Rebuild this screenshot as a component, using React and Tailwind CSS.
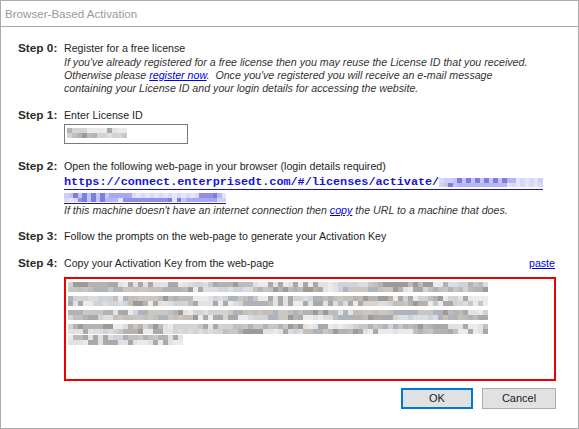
import React from 'react';

// Pixel-mosaic used for the blurred parts (license id, URL tail, activation key).
const mosaic = (seed, count, palette) => {
    let s = seed;
    const out = [];
    for (let i = 0; i < count; i++) {
        s = (s * 1103515245 + 12345) % 2147483648;
        out.push(palette[(s >> 8) % palette.length]);
    }
    return out;
};

const GRAYS = ['#a9a9aa', '#bdbcbc', '#c9c6c4', '#d6d4d3', '#e3e2e2', '#b7b2ad', '#aeb4bb', '#cfd2d6', '#ecebea', '#9d9a98', '#c4bfb9', '#dadde2'];
const BLUES = ['#a8a8f2', '#c4c4f6', '#8f8fe6', '#d8d8fa', '#b6b6f0', '#7d7ddf', '#cfcff7', '#e4e4fb'];

const Mosaic = ({ seed, cols, rows = 2, cell = 5, palette = GRAYS, className = '' }) => {
    const colors = mosaic(seed, cols * rows, palette);
    return (
        <div className={`grid ${className}`} style={{ gridTemplateColumns: `repeat(${cols}, ${cell}px)`, gridAutoRows: `${cell}px` }}>
            {colors.map((c, i) => (
                <span key={i} style={{ background: c }} />
            ))}
        </div>
    );
};

const Step = ({ n, children, className = '' }) => (
    <div className={`flex ${className}`}>
        <div className="w-[46px] shrink-0 font-bold text-[11.8px] leading-[13px] text-[#2b2b2b]">Step {n}:</div>
        <div className="flex-1 min-w-0">{children}</div>
    </div>
);

const App = () => {
    return (
        <div className="w-[579px] h-[429px] bg-white border border-[#ababab] flex flex-col text-[#1e1e1e]" style={{ fontFamily: '"Liberation Sans", Arial, sans-serif' }}>
            {/* Title bar */}
            <div className="h-[26px] shrink-0 border-b border-[#ababab] flex items-center pl-[4px]">
                <span className="text-[11.6px] text-[#9a9a9a]">Browser-Based Activation</span>
            </div>

            {/* Body */}
            <div className="flex-1 pl-[17px] pr-[22px] pt-[15px] text-[10.65px] leading-[13px]">
                <Step n={0}>
                    <div>Register for a free license</div>
                    <div className="italic mt-px text-[#333]">
                        <div>If you&apos;ve already registered for a free license then you may reuse the License ID that you received.</div>
                        <div>
                            Otherwise please <a className="text-[#0000ee] underline">register now</a>.&nbsp; Once you&apos;ve registered you will receive an e-mail message
                        </div>
                        <div>containing your License ID and your login details for accessing the website.</div>
                    </div>
                </Step>

                <Step n={1} className="mt-[14px]">
                    <div>Enter License ID</div>
                    <div className="mt-[2px] w-[124px] h-[20px] border border-[#7a7a7a] pl-[2px] pt-[3px]">
                        <Mosaic seed={7} cols={12} palette={GRAYS} />
                    </div>
                </Step>

                <Step n={2} className="mt-[16px]">
                    <div>Open the following web-page in your browser (login details required)</div>
                    <div className="mt-[3px] text-[11.8px] leading-[14px] font-bold text-[#1414d8]" style={{ fontFamily: '"Liberation Mono", "Courier New", monospace' }}>
                        <div className="flex items-start w-fit border-b border-[#1414d8]">
                            <span className="leading-[13px]">https://connect.enterprisedt.com/#/licenses/activate/</span>
                            <Mosaic seed={3} cols={23} rows={2} cell={4.5} palette={BLUES} className="mt-[2px]" />
                        </div>
                        <div className="flex items-start w-fit border-b border-[#1414d8] h-[14px] pt-[3px]">
                            <Mosaic seed={11} cols={36} rows={2} cell={4.5} palette={BLUES} />
                        </div>
                    </div>
                    <div className="italic text-[#333]">
                        If this machine doesn&apos;t have an internet connection then <a className="text-[#0000ee] underline">copy</a> the URL to a machine that does.
                    </div>
                </Step>

                <Step n={3} className="mt-[13px]">
                    <div>Follow the prompts on the web-page to generate your Activation Key</div>
                </Step>

                <Step n={4} className="mt-[14px]">
                    <div className="flex justify-between">
                        <span>Copy your Activation Key from the web-page</span>
                        <a className="text-[#0000ee] underline mr-px">paste</a>
                    </div>
                    <div className="mt-[7px] h-[104px] border-2 border-[#ee0000] pl-[2px] pt-[3px] flex flex-col gap-[4px]">
                        <Mosaic seed={21} cols={84} cell={5} />
                        <Mosaic seed={42} cols={84} cell={5} />
                        <Mosaic seed={63} cols={84} cell={5} />
                        <Mosaic seed={84} cols={84} cell={5} />
                        <Mosaic seed={99} cols={23} cell={5} className="-mt-[3px]" />
                    </div>
                </Step>

                {/* Buttons */}
                <div className="mt-[7px] flex justify-end gap-[9px] text-[11px]">
                    <button className="w-[72px] h-[21px] bg-[#e1e1e1] border-2 border-[#0078d7] text-[#222]">OK</button>
                    <button className="w-[74px] h-[21px] bg-[#e1e1e1] border border-[#adadad] text-[#222]">Cancel</button>
                </div>
            </div>
        </div>
    );
};

export default App;
